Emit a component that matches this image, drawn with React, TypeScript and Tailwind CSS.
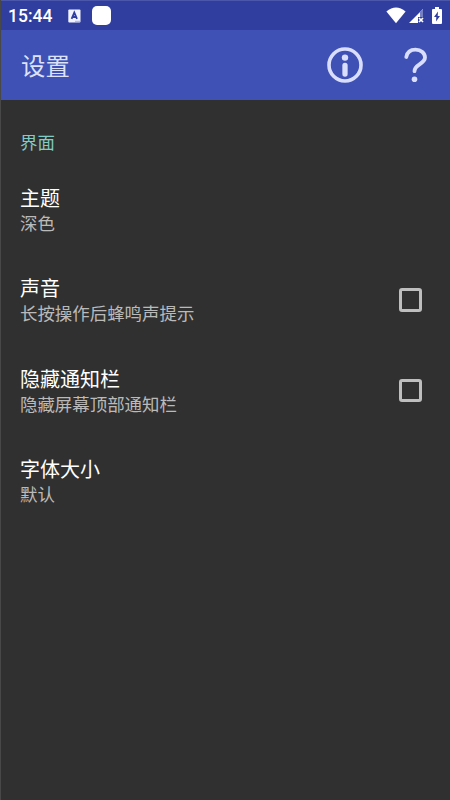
import { useState } from "react";

type Preference = {
  id: string;
  title: string;
  summary: string;
  checkable?: boolean;
};

const preferences: Preference[] = [
  { id: "theme", title: "主题", summary: "深色" },
  { id: "sound", title: "声音", summary: "长按操作后蜂鸣声提示", checkable: true },
  { id: "statusbar", title: "隐藏通知栏", summary: "隐藏屏幕顶部通知栏", checkable: true },
  { id: "fontsize", title: "字体大小", summary: "默认" },
];

function StatusBar() {
  return (
    <div className="flex h-[30px] items-center border-t border-[#4a57ab] bg-[#303f9f] pl-[7px] pr-[7px] text-white">
      <span className="w-[60px] pt-[2px] font-[Roboto] text-[17.5px] font-medium leading-none">15:44</span>
      <svg className="h-[14px] w-[13px]" viewBox="0 0 13 14">
        <rect x="0.3" y="0.5" width="12.2" height="13" rx="1" fill="#f1f3ff" />
        <path d="M3.6 9.8 6.3 3.6 9 9.8M4.5 8h3.6" fill="none" stroke="#303f9f" strokeWidth="1.8" />
        <path d="M7 12.3h5" stroke="#a9b0db" />
      </svg>
      <span className="ml-[11px] h-[19px] w-[19px] rounded-[5px] bg-white" />
      <svg className="ml-auto h-[17px] w-[20px]" viewBox="0 0 20 17">
        <path d="M0.4 4.5Q10-3.3 19.6 4.5L10 16.2Z" fill="#fff" />
      </svg>
      <svg className="ml-[3px] h-[16px] w-[15px]" viewBox="0 0 15 16">
        <path d="M14 1v8H9v6H0Z" fill="#fff" />
        <path d="M14 1v8h-3V4Z" fill="#7681c4" />
        <path d="m10 10 4 4m0-4-4 4" stroke="#fff" strokeWidth="1.7" />
      </svg>
      <svg className="ml-[8px] mr-px h-[17px] w-[10px]" viewBox="0 0 10 17">
        <path d="M3 0h4v2h2q1 0 1 1v13q0 1-1 1H1q-1 0-1-1V3q0-1 1-1h2Z" fill="#fff" />
        <path d="M6 4.5 2 10h2.3L4 14.5 8 9H5.7Z" fill="#303f9f" />
      </svg>
    </div>
  );
}

function Toolbar() {
  return (
    <header className="flex h-[70px] items-center bg-[#3f51b5] pl-5 pr-[22px] text-[#d9deff]">
      <h1 className="text-[24.4px] leading-none text-[#dde2fb]">设置</h1>
      <button type="button" aria-label="关于" className="ml-auto">
        <svg className="h-9 w-9" viewBox="0 0 36 36" fill="none" stroke="currentColor">
          <circle cx="18" cy="18" r="16" strokeWidth="3.6" />
          <circle cx="18" cy="10.6" r="3.2" fill="currentColor" stroke="none" />
          <path d="M18 18.4v8.6" strokeWidth="5.3" strokeLinecap="round" />
        </svg>
      </button>
      <button type="button" aria-label="帮助" className="ml-[41px]">
        <svg className="h-9 w-6" viewBox="0 0 24 36" fill="none" stroke="currentColor">
          <path
            d="M2.3 10C3.2 5.2 6.8 2.7 11.5 2.7c5.6 0 9.5 3.3 9.5 7.9 0 6.4-10.5 6.8-10.5 13.6"
            strokeWidth="3.8"
            strokeLinecap="round"
          />
          <circle cx="10.5" cy="32.3" r="2.8" fill="currentColor" stroke="none" />
        </svg>
      </button>
    </header>
  );
}

function PreferenceRow({ item }: { item: Preference }) {
  const [checked, setChecked] = useState(false);

  return (
    <li
      className="flex h-[90.5px] items-center justify-between pl-[19px] pr-7"
      onClick={() => setChecked(!checked)}
    >
      <div>
        <p className="text-[20px] leading-[26px] text-white">{item.title}</p>
        <p className="text-[17.45px] leading-[24px] text-[#bababa]">{item.summary}</p>
      </div>
      {item.checkable ? (
        <span
          role="checkbox"
          aria-checked={checked}
          aria-label={item.title}
          className={`mb-px h-[23.5px] w-[23.5px] rounded-[3px] border-3 border-[#bebebe] ${
            checked ? "bg-[#80cbc4]" : ""
          }`}
        />
      ) : null}
    </li>
  );
}

export default function App() {
  return (
    <div className="h-[800px] w-[450px] overflow-hidden border-l border-[#484848] bg-[#303030] font-['Noto_Sans_CJK_SC',sans-serif]">
      <StatusBar />
      <Toolbar />
      <main>
        <h2 className="h-[64.5px] pl-[19px] pt-[30px] text-[17.45px] leading-[24px] text-[#80cbc4]">界面</h2>
        <ul>
          {preferences.map((item) => (
            <PreferenceRow key={item.id} item={item} />
          ))}
        </ul>
      </main>
    </div>
  );
}
